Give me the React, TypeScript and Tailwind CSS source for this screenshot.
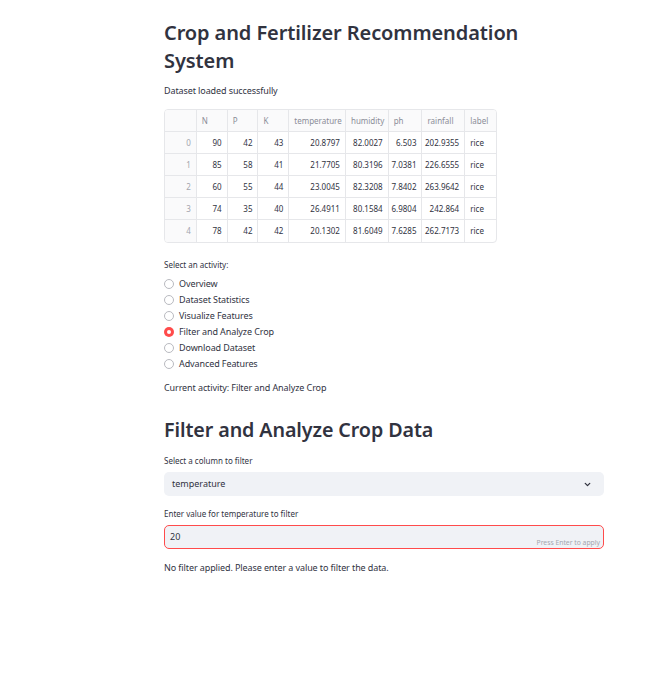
import React from "react";

const cols = [
  { k: "", w: 32 },
  { k: "N", w: 31 },
  { k: "P", w: 31 },
  { k: "K", w: 31 },
  { k: "temperature", w: 57 },
  { k: "humidity", w: 43 },
  { k: "ph", w: 34 },
  { k: "rainfall", w: 43 },
  { k: "label", w: 31 },
];

const rows = [
  ["0", "90", "42", "43", "20.8797", "82.0027", "6.503", "202.9355", "rice"],
  ["1", "85", "58", "41", "21.7705", "80.3196", "7.0381", "226.6555", "rice"],
  ["2", "60", "55", "44", "23.0045", "82.3208", "7.8402", "263.9642", "rice"],
  ["3", "74", "35", "40", "26.4911", "80.1584", "6.9804", "242.864", "rice"],
  ["4", "78", "42", "42", "20.1302", "81.6049", "7.6285", "262.7173", "rice"],
];

const activities = [
  "Overview",
  "Dataset Statistics",
  "Visualize Features",
  "Filter and Analyze Crop",
  "Download Dataset",
  "Advanced Features",
];

export default function App() {
  return (
    <div
      className="w-full min-h-[674px] bg-white text-[#31333f]"
      style={{ fontFamily: '"Noto Sans", "Open Sans", sans-serif' }}
    >
      <div className="ml-[164px] w-[440px] pt-[19px] pb-10">
        <h1 className="w-[420px] text-[20px] leading-[28px] font-semibold tracking-[-0.1px]">
          Crop and Fertilizer Recommendation System
        </h1>
        <p className="mt-[9px] text-[9px] leading-[14px] tracking-[-0.1px]">Dataset loaded successfully</p>

        <div className="mt-[11px] w-[333px] border border-[#e6e7ea] rounded-[4px] overflow-hidden text-[8px]">
          <div className="flex h-[22px] bg-[#fafafb] border-b border-[#e6e7ea]">
            {cols.map((c, i) => (
              <div
                key={i}
                className={`flex items-center pl-[5px] text-[#8b8d98] ${i < cols.length - 1 ? "border-r border-[#e6e7ea]" : ""}`}
                style={{ width: c.w }}
              >
                {c.k}
              </div>
            ))}
          </div>
          {rows.map((r, ri) => (
            <div
              key={ri}
              className={`flex h-[22px] ${ri < rows.length - 1 ? "border-b border-[#e6e7ea]" : ""}`}
            >
              {r.map((v, i) => (
                <div
                  key={i}
                  className={`flex items-center ${i === 8 ? "justify-start pl-[5px]" : "justify-end pr-[5px]"} ${i === 0 ? "text-[#a3a5ad] bg-[#fafafb]" : "text-[#31333f]"} ${i < r.length - 1 ? "border-r border-[#e6e7ea]" : ""}`}
                  style={{ width: cols[i].w }}
                >
                  {v}
                </div>
              ))}
            </div>
          ))}
        </div>

        <p className="mt-[16px] text-[8px] leading-[12px]">Select an activity:</p>
        <div className="mt-[5px] flex flex-col">
          {activities.map((a) => {
            const sel = a === "Filter and Analyze Crop";
            return (
              <div key={a} className="flex items-center h-[16px]">
                {sel ? (
                  <span className="w-[10px] h-[10px] rounded-full bg-[#ff4b4b] flex items-center justify-center">
                    <span className="w-[4px] h-[4px] rounded-full bg-white" />
                  </span>
                ) : (
                  <span className="w-[10px] h-[10px] rounded-full border border-[#b9bac0] bg-white" />
                )}
                <span className="ml-[5px] text-[9px] leading-[14px] tracking-[-0.1px]">{a}</span>
              </div>
            );
          })}
        </div>

        <p className="mt-[9px] text-[9px] leading-[14px] tracking-[-0.1px]">Current activity: Filter and Analyze Crop</p>

        <h2 className="mt-[20px] text-[19.7px] leading-[30px] font-semibold tracking-[-0.1px]">
          Filter and Analyze Crop Data
        </h2>

        <p className="mt-[10px] text-[8px] leading-[12px]">Select a column to filter</p>
        <div className="mt-[5px] h-[24px] rounded-[5px] bg-[#f0f2f6] flex items-center justify-between pl-[8px] pr-[12px]">
          <span className="text-[9px]">temperature</span>
          <svg width="9" height="9" viewBox="0 0 24 24" fill="none" stroke="#31333f" strokeWidth="3.5" strokeLinecap="round" strokeLinejoin="round">
            <path d="M6 9l6 6 6-6" />
          </svg>
        </div>

        <p className="mt-[12px] text-[8px] leading-[12px]">Enter value for temperature to filter</p>
        <div className="mt-[5px] h-[24px] rounded-[5px] bg-[#f0f2f6] border border-[#ff4b4b] relative flex items-center pl-[5px]">
          <span className="text-[9px]">20</span>
          <span className="absolute right-[3px] bottom-[1px] text-[6.8px] leading-[8px] text-[#a3a5ad]">Press Enter to apply</span>
        </div>

        <p className="mt-[12px] text-[9px] leading-[14px] tracking-[-0.1px]">No filter applied. Please enter a value to filter the data.</p>
      </div>
    </div>
  );
}
